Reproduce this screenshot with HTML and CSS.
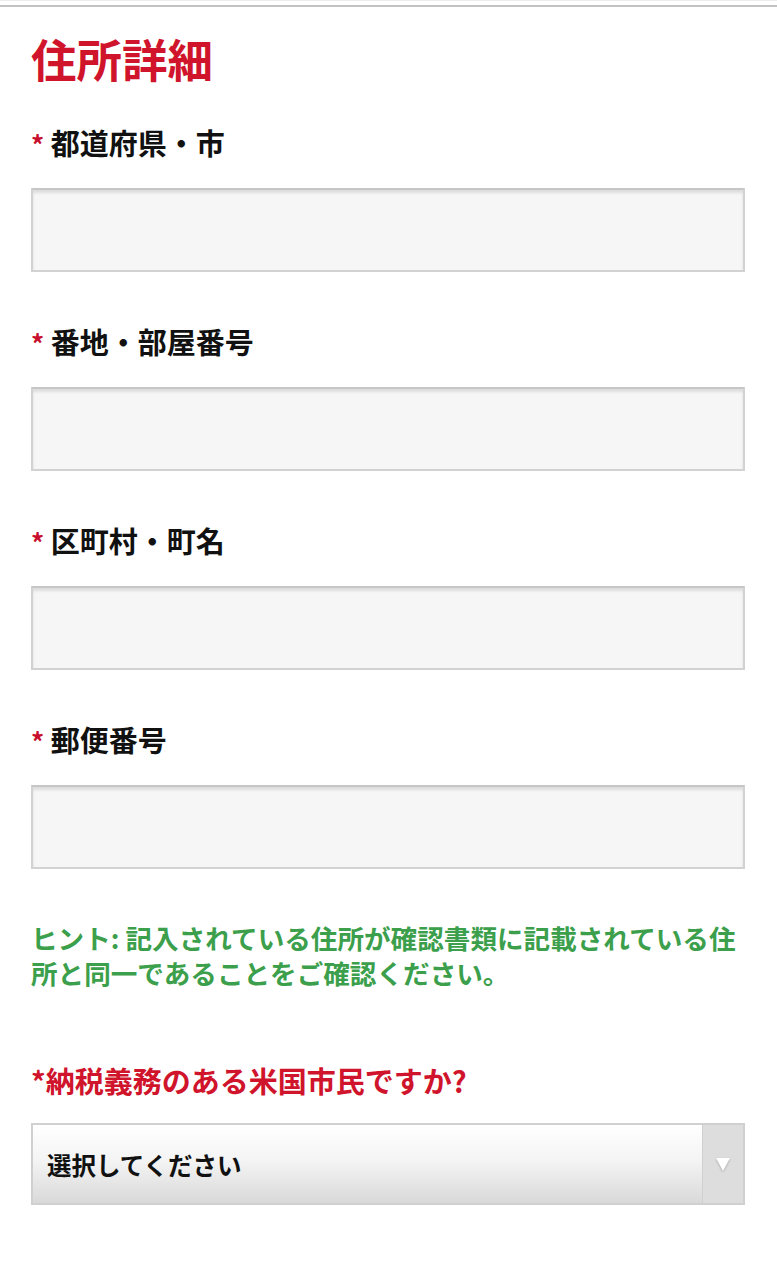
FILE: index.html
```html
<!DOCTYPE html>
<html lang="ja">
<head>
    <meta charset="UTF-8">
    <meta name="viewport" content="width=device-width, initial-scale=1.0">
    <title>住所詳細</title>
    <link rel="stylesheet" href="styles.css">
</head>
<body>
    <div class="topbar"></div>
    <div class="form">
        <h1>住所詳細</h1>

        <div class="field">
            <label><span class="req">*</span> 都道府県・市</label>
            <input type="text" class="text-input">
        </div>
        <div class="field">
            <label><span class="req">*</span> 番地・部屋番号</label>
            <input type="text" class="text-input">
        </div>
        <div class="field">
            <label><span class="req">*</span> 区町村・町名</label>
            <input type="text" class="text-input">
        </div>
        <div class="field">
            <label><span class="req">*</span> 郵便番号</label>
            <input type="text" class="text-input">
        </div>

        <p class="hint">ヒント: 記入されている住所が確認書類に記載されている住所と同一であることをご確認ください。</p>

        <div class="field question">
            <label class="red-label">*納税義務のある米国市民ですか?</label>
            <div class="select">
                <span class="select-text">選択してください</span>
                <span class="select-arrow"></span>
            </div>
        </div>
    </div>
</body>
</html>
```

FILE: styles.css
```css
body {
    margin: 0;
    background-color: #fff;
    font-family: "Noto Sans CJK JP", "Noto Sans", sans-serif;
    color: #111;
}
.topbar {
    height: 4px;
    border-top: 1px solid #ececec;
    border-bottom: 2px solid #c2c2c2;
}
.form {
    padding: 0 32px 0 31px;
}
h1 {
    margin: 23px 0 41px;
    font-size: 45.5px;
    line-height: 56px;
    font-weight: 700;
    color: #d0142c;
}
.field {
    margin-bottom: 54px;
}
label {
    display: block;
    font-size: 29px;
    line-height: 36px;
    font-weight: 700;
    margin-bottom: 26px;
}
.field label {
    margin-top: -3px;
}
.req {
    color: #c8102e;
    font-size: 26px;
}
.text-input {
    display: block;
    box-sizing: border-box;
    width: 100%;
    height: 84px;
    background-color: #f6f6f6;
    border: 2px solid #d2d2d2;
    border-top-color: #c6c6c6;
    box-shadow: inset 0 3px 3px rgba(0, 0, 0, 0.1);
    border-radius: 0;
    font-size: 24px;
    padding: 0 14px;
    outline: none;
}
.hint {
    margin: -3px -8px 73px 0;
    font-size: 26.6px;
    line-height: 35px;
    font-weight: 700;
    color: #3c9f4c;
}
.red-label {
    color: #d0142c;
    margin-bottom: 25px;
}
.field .red-label {
    margin-top: -1px;
}
.select {
    display: flex;
    align-items: stretch;
    height: 82px;
    box-sizing: border-box;
    border: 2px solid #d0d0d0;
    background: linear-gradient(to bottom, #ffffff 0%, #f4f4f4 45%, #d9d9d9 100%);
}
.select-text {
    flex: 1;
    display: flex;
    align-items: center;
    padding-left: 14px;
    font-size: 24.5px;
    font-weight: 700;
    color: #111;
}
.select-arrow {
    width: 40px;
    background-color: #dddddd;
    border-left: 1px solid #d0d0d0;
    display: flex;
    align-items: center;
    justify-content: center;
}
.select-arrow::after {
    content: "";
    width: 0;
    height: 0;
    border-left: 7px solid transparent;
    border-right: 7px solid transparent;
    border-top: 13px solid #fff;
    filter: drop-shadow(0 1px 1px rgba(0, 0, 0, 0.25));
}
```
